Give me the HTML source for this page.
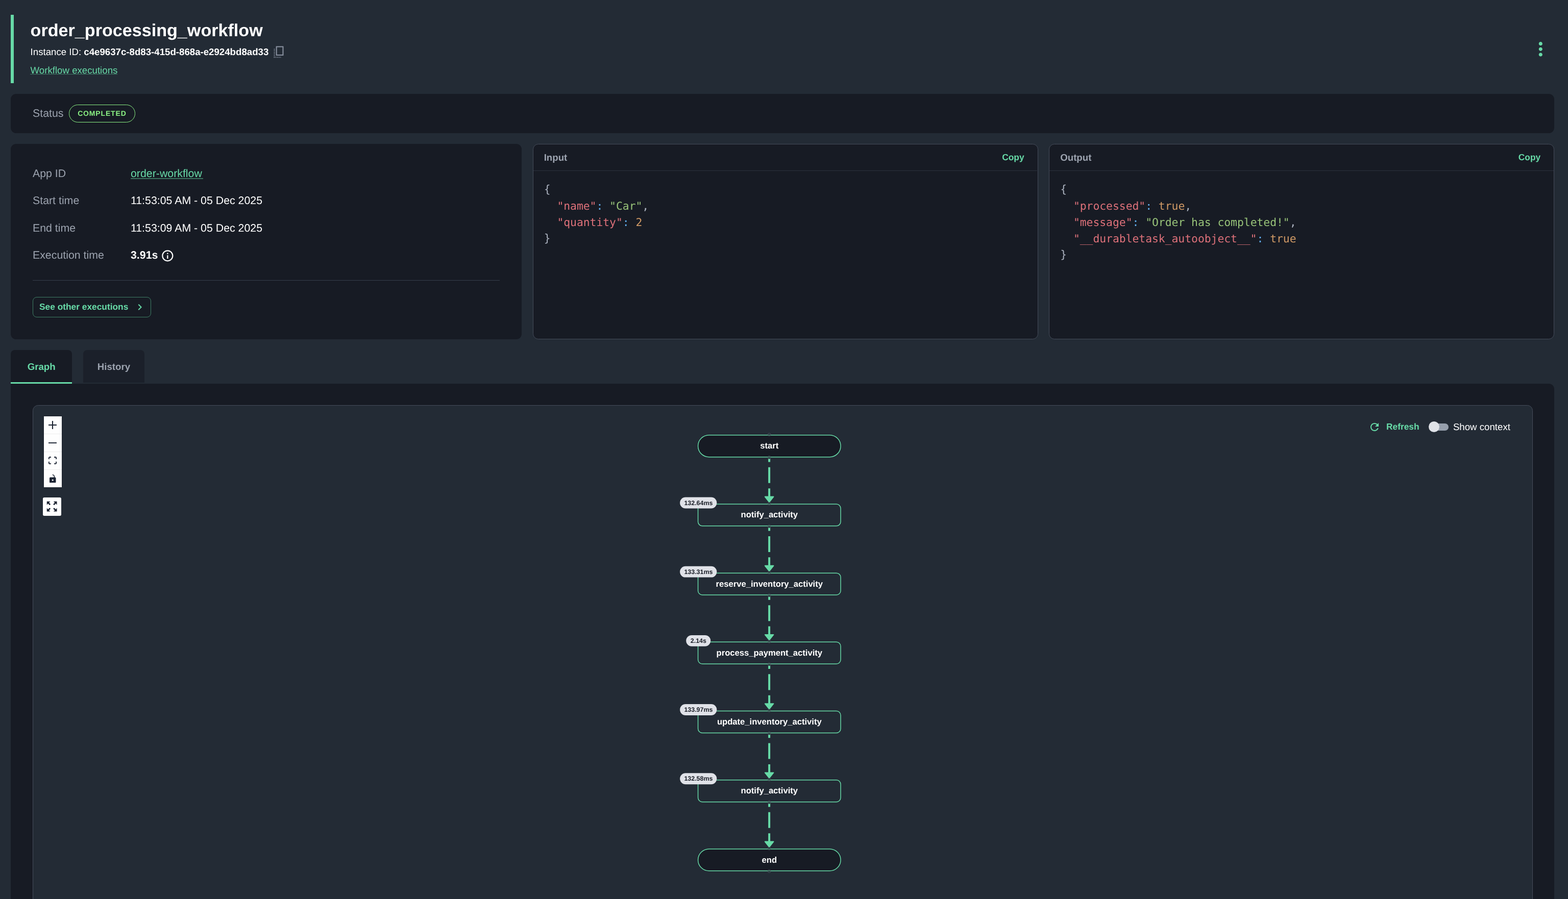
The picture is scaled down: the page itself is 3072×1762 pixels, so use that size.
<!DOCTYPE html>
<html lang="en"><head><meta charset="utf-8"><title>order_processing_workflow</title>
<style>
*{box-sizing:border-box;margin:0;padding:0}
html{background:#232b35;overflow:hidden}
body{background:#232b35;min-height:100vh}
#root{position:absolute;left:0;top:0;width:3072px;height:1762px;overflow:hidden;background:#232b35}
body{font-family:"Liberation Sans",Arial,Helvetica,sans-serif;color:#fff;text-rendering:geometricPrecision}
#page{position:absolute;left:0;top:0;width:2304px;height:1321.5px;zoom:1.333333;overflow:hidden;will-change:transform}
#flow{position:absolute;left:0;top:0;width:3072px;height:1762px;overflow:hidden;will-change:transform}
.a{position:absolute}
.t{position:absolute;display:block;white-space:pre;line-height:1;font-weight:normal}
.b,.t.b{font-weight:bold}
.g{color:#67daa7}
.gr{color:#9ca3af}
.u{text-decoration:none}
.card{position:absolute;background:#171b24;border-radius:8px}
.bcard{border:1px solid #454c5a}
.s14{font-size:14px} .s16{font-size:16px} .s13{font-size:13px}
.code{position:absolute;font-family:"DejaVu Sans Mono","Liberation Mono",monospace;font-size:16px;line-height:24px;white-space:pre;color:#abb2bf}
.br{position:relative;top:-0.9px} .k{color:#de717a} .c{color:#61afef} .s{color:#98c379} .n{color:#d19a66}
</style></head>
<body>
<div id="root">
<div id="page">
<div class="a" style="left:16px;top:21.75px;width:4px;height:100.5px;background:#67daa7"></div>
<h1 class="t b" style="left:44.70px;top:32.53px;font-size:25.6px;">order_processing_workflow</h1>
<div class="t" style="left:44.70px;top:69.45px;font-size:14px;">Instance ID: <b>c4e9637c-8d83-415d-868a-e2924bd8ad33</b></div>
<a class="t g u" style="left:44.70px;top:96.60px;font-size:14px;">Workflow executions</a>
<div class="a" style="left:44.2px;top:108.75px;width:128.3px;height:0.8px;background:#427a68"></div>
<svg class="a" style="left:401px;top:67px" width="17" height="20" viewBox="0 0 17 20">
<rect x="5" y="1.9" width="9.6" height="12.3" fill="none" stroke="#8b93a2" stroke-width="1.5"/>
<path d="M1.9 5 V17.4 H11.5" fill="none" stroke="#8b93a2" stroke-width="1.5" stroke-dasharray="1.1 1.25"/>
</svg>
<svg class="a" style="left:2247.6px;top:56.25px" width="32" height="32" viewBox="0 0 24 24" fill="#67daa7"><path d="M12 8c1.1 0 2-.9 2-2s-.9-2-2-2-2 .9-2 2 .9 2 2 2zm0 2c-1.1 0-2 .9-2 2s.9 2 2 2 2-.9 2-2-.9-2-2-2zm0 6c-1.1 0-2 .9-2 2s.9 2 2 2 2-.9 2-2-.9-2-2-2z"/></svg>
<div class="card" style="left:16px;top:138px;width:2268px;height:57.75px"></div>
<div class="t gr" style="left:48.00px;top:159.06px;font-size:16px;">Status</div>
<div class="a" style="left:101.06px;top:153.56px;width:97.76px;height:26.6px;border:1px solid #8af083;border-radius:14px"></div>
<div class="t b" style="left:114.10px;top:161.51px;font-size:10.5px;color:#8af083;letter-spacing:0.64px">COMPLETED</div>
<div class="card" style="left:16px;top:211.8px;width:750.35px;height:286.6px"></div>
<div class="t gr" style="left:48.00px;top:247.56px;font-size:16px;">App ID</div>
<div class="t gr" style="left:48.00px;top:287.41px;font-size:16px;">Start time</div>
<div class="t" style="left:192.00px;top:287.41px;font-size:16px;">11:53:05 AM - 05 Dec 2025</div>
<div class="t gr" style="left:48.00px;top:327.76px;font-size:16px;">End time</div>
<div class="t" style="left:192.00px;top:327.76px;font-size:16px;">11:53:09 AM - 05 Dec 2025</div>
<div class="t gr" style="left:48.00px;top:367.56px;font-size:16px;">Execution time</div>
<a class="t g u" style="left:192.00px;top:247.56px;font-size:16px;">order-workflow</a>
<div class="a" style="left:191.9px;top:261.75px;width:106.4px;height:1.5px;background:#3b735f"></div>
<div class="t b" style="left:192.00px;top:367.56px;font-size:16px;">3.91s</div>
<svg class="a" style="left:236.15px;top:366px" width="20" height="20" viewBox="0 0 24 24" fill="#fff"><path d="M11 17h2v-6h-2v6zm1-15C6.48 2 2 6.48 2 12s4.48 10 10 10 10-4.48 10-10S17.52 2 12 2zm0 18c-4.41 0-8-3.59-8-8s3.59-8 8-8 8 3.59 8 8-3.59 8-8 8zM11 9h2V7h-2v2z"/></svg>
<div class="a" style="left:48px;top:411.6px;width:686.35px;height:1px;background:#363d4a"></div>
<div class="a" style="left:48px;top:436.6px;width:174.1px;height:29.85px;border:1px solid #3e7d64;border-radius:6px"></div>
<div class="t b g" style="left:57.75px;top:444.70px;font-size:13px;">See other executions</div>
<svg class="a" style="left:196.7px;top:442.4px" width="18" height="18" viewBox="0 0 24 24" fill="#67daa7"><path d="M10 6L8.59 7.41 13.17 12l-4.58 4.59L10 18l6-6z"/></svg>
<div class="card bcard" style="left:782.67px;top:211.8px;width:742.67px;height:286.6px"></div>
<div class="a" style="left:783.67px;top:250.4px;width:740.67px;height:1px;background:#2b313d"></div>
<div class="t b gr" style="left:799.27px;top:225.10px;font-size:14px;">Input</div>
<div class="t b g" style="left:1472.45px;top:225.20px;font-size:13px;">Copy</div>
<div class="code" style="left:799.27px;top:268.1px"><span class="br">{</span>
  <span class="k">"name"</span><span class="c">:</span> <span class="s">"Car"</span>,
  <span class="k">"quantity"</span><span class="c">:</span> <span class="n">2</span>
<span class="br">}</span></div>
<div class="card bcard" style="left:1541.33px;top:211.8px;width:742.67px;height:286.6px"></div>
<div class="a" style="left:1542.33px;top:250.4px;width:740.67px;height:1px;background:#2b313d"></div>
<div class="t b gr" style="left:1557.93px;top:225.10px;font-size:14px;">Output</div>
<div class="t b g" style="left:2231.15px;top:225.20px;font-size:13px;">Copy</div>
<div class="code" style="left:1557.9299999999998px;top:268.1px"><span class="br">{</span>
  <span class="k">"processed"</span><span class="c">:</span> <span class="n">true</span>,
  <span class="k">"message"</span><span class="c">:</span> <span class="s">"Order has completed!"</span>,
  <span class="k">"__durabletask_autoobject__"</span><span class="c">:</span> <span class="n">true</span>
<span class="br">}</span></div>
<div class="a" style="left:16px;top:514.5px;width:90.1px;height:49.5px;background:#171b24;border-radius:6px 6px 0 0"></div>
<div class="a" style="left:16px;top:561.6px;width:90.1px;height:2.4px;background:#67daa7"></div>
<div class="a" style="left:122.25px;top:514.5px;width:90.2px;height:48.1px;background:#1b202a;border-radius:6px 6px 0 0"></div>
<div class="t b g" style="left:40.30px;top:532.65px;font-size:14px;">Graph</div>
<div class="t b gr" style="left:143.10px;top:532.65px;font-size:14px;">History</div>
<div class="a" style="left:16px;top:564px;width:2268px;height:800px;background:#171b24;border-radius:0 8px 0 0"></div>
<div class="a" style="left:48px;top:595.6px;width:2204.25px;height:800px;background:#232b35;border:1px solid #454c5a;border-radius:8px"></div>
<div class="a" style="left:64.4px;top:611.7px;width:26.3px;height:104.7px;background:#fefefe;box-shadow:0 0 2px 1px rgba(0,0,0,.08)"></div>
<div class="a" style="left:64.4px;top:637.35px;width:26.3px;height:1px;background:#eee"></div>
<div class="a" style="left:64.4px;top:663.50px;width:26.3px;height:1px;background:#eee"></div>
<div class="a" style="left:64.4px;top:689.65px;width:26.3px;height:1px;background:#eee"></div>
<svg class="a" style="left:71.5px;top:618.9px" width="12" height="12" viewBox="0 0 32 32"><path fill="#1c2433" d="M32 18.133H18.133V32h-4.266V18.133H0v-4.266h13.867V0h4.266v13.867H32z"/></svg>
<svg class="a" style="left:71.5px;top:650.1px" width="12" height="2" viewBox="0 0 32 5"><path fill="#1c2433" d="M0 0h32v4.2H0z"/></svg>
<svg class="a" style="left:71.5px;top:671.2px" width="12" height="11.3" viewBox="0 0 32 30"><path fill="#1c2433" d="M3.692 4.63c0-.53.4-.938.939-.938h5.215V0H4.708C2.13 0 0 2.054 0 4.63v5.216h3.692V4.631zM27.354 0h-5.2v3.692h5.17c.53 0 .984.4.984.939v5.215H32V4.631A4.624 4.624 0 0027.354 0zm.954 24.83c0 .532-.4.94-.939.94h-5.215v3.768h5.215c2.577 0 4.631-2.13 4.631-4.707v-5.139h-3.692v5.139zm-23.677.94c-.531 0-.939-.4-.939-.94v-5.138H0v5.139c0 2.577 2.13 4.707 4.708 4.707h5.138V25.77H4.631z"/></svg>
<svg class="a" style="left:72.6px;top:697.3px" width="9.6" height="12.3" viewBox="0 0 25 32"><path fill="#1c2433" d="M21.333 10.667H19.81V7.619C19.81 3.429 16.38 0 12.19 0c-4.114 1.828-1.37 2.133.305 2.438 1.676.305 4.42 2.59 4.42 5.181v3.048H3.047A3.056 3.056 0 000 13.714v15.238A3.056 3.056 0 003.048 32h18.285a3.056 3.056 0 003.048-3.048V13.714a3.056 3.056 0 00-3.048-3.047zM12.19 24.533a3.056 3.056 0 01-3.047-3.047 3.056 3.056 0 013.047-3.048 3.056 3.056 0 013.048 3.048 3.056 3.056 0 01-3.048 3.047z"/></svg>
<div class="a" style="left:62.9px;top:731.25px;width:27.2px;height:27.2px;background:#fff;border-radius:2px"></div>
<svg class="a" style="left:68.5px;top:736.85px" width="16" height="16" viewBox="0 0 16 16" fill="#1c2433">
<path d="M0.6 0.6h5l-1.8 1.8 2.3 2.3-1.4 1.4-2.3-2.3-1.8 1.8z"/>
<path d="M15.4 0.6v5l-1.8-1.8-2.3 2.3-1.4-1.4 2.3-2.3-1.8-1.8z"/>
<path d="M0.6 15.4v-5l1.8 1.8 2.3-2.3 1.4 1.4-2.3 2.3 1.8 1.8z"/>
<path d="M15.4 15.4h-5l1.8-1.8-2.3-2.3 1.4-1.4 2.3 2.3 1.8-1.8z"/>
</svg>
<svg class="a" style="left:2010.6px;top:618.7px" width="18" height="18" viewBox="0 0 24 24" fill="#67daa7"><path d="M17.65 6.35C16.2 4.9 14.21 4 12 4c-4.42 0-7.99 3.58-7.99 8s3.57 8 7.99 8c3.73 0 6.84-2.55 7.73-6h-2.08c-.82 2.33-3.04 4-5.65 4-3.31 0-6-2.69-6-6s2.69-6 6-6c1.66 0 3.14.69 4.22 1.78L13 11h7V4l-2.35 2.35z"/></svg>
<div class="t b g" style="left:2037.00px;top:621.30px;font-size:13px;">Refresh</div>
<div class="a" style="left:2100px;top:622.4px;width:28.5px;height:10.3px;border-radius:6px;background:#969fac"></div>
<div class="a" style="left:2098.95px;top:619.5px;width:16px;height:16px;border-radius:50%;background:#e0e3e8"></div>
<div class="t" style="left:2135.20px;top:621.05px;font-size:14px;">Show context</div>
</div>
<svg id="flow" width="3072" height="1762" viewBox="0 0 3072 1762" font-family="Liberation Sans, Arial, sans-serif" font-weight="bold">
<path d="M1507.1 874.35 V979.20" stroke="#67daa7" stroke-width="4.0" stroke-dasharray="31.05 10.35" fill="none"/>
<path d="M1498.8 973.60 H1515.4 L1507.1 984.10 Z" fill="#67daa7" stroke="#67daa7" stroke-width="2" stroke-linejoin="round"/>
<path d="M1507.1 1009.55 V1114.40" stroke="#67daa7" stroke-width="4.0" stroke-dasharray="31.05 10.35" fill="none"/>
<path d="M1498.8 1108.80 H1515.4 L1507.1 1119.30 Z" fill="#67daa7" stroke="#67daa7" stroke-width="2" stroke-linejoin="round"/>
<path d="M1507.1 1144.75 V1249.60" stroke="#67daa7" stroke-width="4.0" stroke-dasharray="31.05 10.35" fill="none"/>
<path d="M1498.8 1244.00 H1515.4 L1507.1 1254.50 Z" fill="#67daa7" stroke="#67daa7" stroke-width="2" stroke-linejoin="round"/>
<path d="M1507.1 1279.95 V1384.80" stroke="#67daa7" stroke-width="4.0" stroke-dasharray="31.05 10.35" fill="none"/>
<path d="M1498.8 1379.20 H1515.4 L1507.1 1389.70 Z" fill="#67daa7" stroke="#67daa7" stroke-width="2" stroke-linejoin="round"/>
<path d="M1507.1 1415.15 V1520.00" stroke="#67daa7" stroke-width="4.0" stroke-dasharray="31.05 10.35" fill="none"/>
<path d="M1498.8 1514.40 H1515.4 L1507.1 1524.90 Z" fill="#67daa7" stroke="#67daa7" stroke-width="2" stroke-linejoin="round"/>
<path d="M1507.1 1550.35 V1655.20" stroke="#67daa7" stroke-width="4.0" stroke-dasharray="31.05 10.35" fill="none"/>
<path d="M1498.8 1649.60 H1515.4 L1507.1 1660.10 Z" fill="#67daa7" stroke="#67daa7" stroke-width="2" stroke-linejoin="round"/>
<circle cx="1507.1" cy="896.40" r="3" fill="#232b35"/>
<rect x="1367.55" y="852.75" width="279.50" height="42.90" rx="21.45" fill="#171b24" stroke="#67daa7" stroke-width="1.5"/>
<circle cx="1507.1" cy="851.80" r="2.8" fill="#232b35" fill-opacity="0.35" stroke="#596070" stroke-width="0.7"/>
<circle cx="1507.1" cy="896.40" r="2.8" fill="#232b35" fill-opacity="0.35" stroke="#596070" stroke-width="0.7"/>
<text x="1507.3" y="879.00" font-size="16.6" fill="#fff" text-anchor="middle">start</text>
<circle cx="1507.1" cy="1031.60" r="3" fill="#232b35"/>
<rect x="1367.55" y="987.95" width="279.50" height="42.90" rx="8.40" fill="#232b35" stroke="#67daa7" stroke-width="1.5"/>
<circle cx="1507.1" cy="987.00" r="2.8" fill="#232b35" fill-opacity="0.35" stroke="#596070" stroke-width="0.7"/>
<circle cx="1507.1" cy="1031.60" r="2.8" fill="#232b35" fill-opacity="0.35" stroke="#596070" stroke-width="0.7"/>
<text x="1507.3" y="1014.20" font-size="16.6" fill="#fff" text-anchor="middle">notify_activity</text>
<rect x="1332.10" y="974.50" width="72.2" height="21.9" rx="10.95" fill="#e0e2e8"/>
<text x="1368.40" y="989.60" font-size="12.45" fill="#181c25" text-anchor="middle">132.64ms</text>
<circle cx="1507.1" cy="1166.80" r="3" fill="#232b35"/>
<rect x="1367.55" y="1123.15" width="279.50" height="42.90" rx="8.40" fill="#232b35" stroke="#67daa7" stroke-width="1.5"/>
<circle cx="1507.1" cy="1122.20" r="2.8" fill="#232b35" fill-opacity="0.35" stroke="#596070" stroke-width="0.7"/>
<circle cx="1507.1" cy="1166.80" r="2.8" fill="#232b35" fill-opacity="0.35" stroke="#596070" stroke-width="0.7"/>
<text x="1507.3" y="1149.90" font-size="16.6" fill="#fff" text-anchor="middle">reserve_inventory_activity</text>
<rect x="1332.10" y="1109.70" width="72.2" height="21.9" rx="10.95" fill="#e0e2e8"/>
<text x="1368.40" y="1124.80" font-size="12.45" fill="#181c25" text-anchor="middle">133.31ms</text>
<circle cx="1507.1" cy="1302.00" r="3" fill="#232b35"/>
<rect x="1367.55" y="1258.35" width="279.50" height="42.90" rx="8.40" fill="#232b35" stroke="#67daa7" stroke-width="1.5"/>
<circle cx="1507.1" cy="1257.40" r="2.8" fill="#232b35" fill-opacity="0.35" stroke="#596070" stroke-width="0.7"/>
<circle cx="1507.1" cy="1302.00" r="2.8" fill="#232b35" fill-opacity="0.35" stroke="#596070" stroke-width="0.7"/>
<text x="1507.3" y="1284.80" font-size="16.6" fill="#fff" text-anchor="middle">process_payment_activity</text>
<rect x="1344.20" y="1244.90" width="48.0" height="21.9" rx="10.95" fill="#e0e2e8"/>
<text x="1368.40" y="1260.00" font-size="12.45" fill="#181c25" text-anchor="middle">2.14s</text>
<circle cx="1507.1" cy="1437.20" r="3" fill="#232b35"/>
<rect x="1367.55" y="1393.55" width="279.50" height="42.90" rx="8.40" fill="#232b35" stroke="#67daa7" stroke-width="1.5"/>
<circle cx="1507.1" cy="1392.60" r="2.8" fill="#232b35" fill-opacity="0.35" stroke="#596070" stroke-width="0.7"/>
<circle cx="1507.1" cy="1437.20" r="2.8" fill="#232b35" fill-opacity="0.35" stroke="#596070" stroke-width="0.7"/>
<text x="1507.3" y="1419.90" font-size="16.6" fill="#fff" text-anchor="middle">update_inventory_activity</text>
<rect x="1332.10" y="1380.10" width="72.2" height="21.9" rx="10.95" fill="#e0e2e8"/>
<text x="1368.40" y="1395.20" font-size="12.45" fill="#181c25" text-anchor="middle">133.97ms</text>
<circle cx="1507.1" cy="1572.40" r="3" fill="#232b35"/>
<rect x="1367.55" y="1528.75" width="279.50" height="42.90" rx="8.40" fill="#232b35" stroke="#67daa7" stroke-width="1.5"/>
<circle cx="1507.1" cy="1527.80" r="2.8" fill="#232b35" fill-opacity="0.35" stroke="#596070" stroke-width="0.7"/>
<circle cx="1507.1" cy="1572.40" r="2.8" fill="#232b35" fill-opacity="0.35" stroke="#596070" stroke-width="0.7"/>
<text x="1507.3" y="1554.80" font-size="16.6" fill="#fff" text-anchor="middle">notify_activity</text>
<rect x="1332.10" y="1515.30" width="72.2" height="21.9" rx="10.95" fill="#e0e2e8"/>
<text x="1368.40" y="1530.40" font-size="12.45" fill="#181c25" text-anchor="middle">132.58ms</text>
<circle cx="1507.1" cy="1707.60" r="3" fill="#232b35"/>
<rect x="1367.55" y="1663.95" width="279.50" height="42.90" rx="21.45" fill="#171b24" stroke="#67daa7" stroke-width="1.5"/>
<circle cx="1507.1" cy="1663.00" r="2.8" fill="#232b35" fill-opacity="0.35" stroke="#596070" stroke-width="0.7"/>
<circle cx="1507.1" cy="1707.60" r="2.8" fill="#232b35" fill-opacity="0.35" stroke="#596070" stroke-width="0.7"/>
<text x="1507.3" y="1691.10" font-size="16.6" fill="#fff" text-anchor="middle">end</text>
</svg>
</div>
<script>
(function(){var w=window.innerWidth||3072;if(w&&Math.abs(w-3072)>1){document.getElementById('root').style.zoom=(w/3072);}})();
</script>
</body></html>
